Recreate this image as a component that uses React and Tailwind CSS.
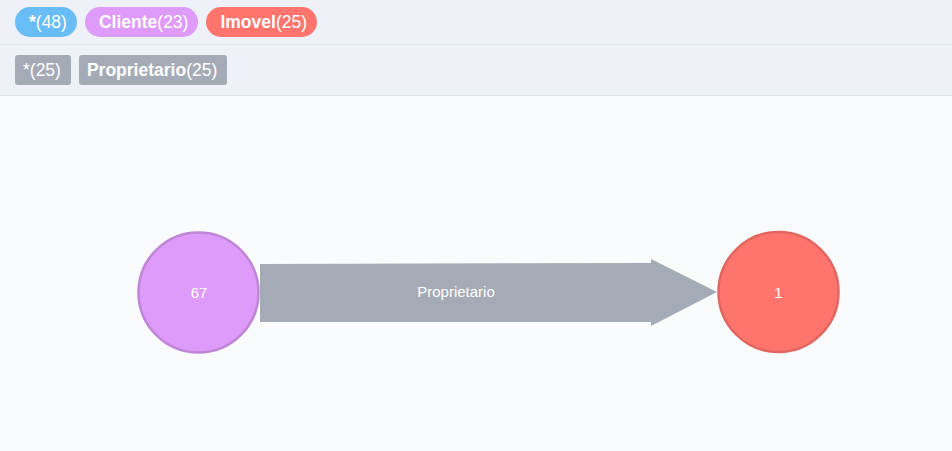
import React from "react";

const font = { fontFamily: '"Liberation Sans", Arial, sans-serif' };

function Pill({ label, count, bg }) {
  return (
    <div className={`flex items-center h-[30px] rounded-full pl-[14px] pr-[10px] text-[17.5px] text-white ${bg}`}>
      <span className="font-bold">{label}</span>
      <span>({count})</span>
    </div>
  );
}

function Tag({ label, count, bold }) {
  return (
    <div className="flex items-center h-[30px] rounded-[3px] pl-[8px] pr-[10px] text-[17.5px] text-white bg-[#a5abb6]">
      <span className={bold ? "font-bold" : ""}>{label}</span>
      <span>({count})</span>
    </div>
  );
}

export default function App() {
  return (
    <div className="w-[952px] h-[451px] flex flex-col bg-[#f9fbfd] overflow-hidden" style={font}>
      <div className="h-[45px] flex items-start pt-[7px] pl-[15px] gap-[8px] bg-[#eef1f8] border-b border-[#e1e5ed]">
        <Pill label="*" count="48" bg="bg-[#68bdf6]" />
        <Pill label="Cliente" count="23" bg="bg-[#de9bf9]" />
        <Pill label="Imovel" count="25" bg="bg-[#ff756e]" />
      </div>
      <div className="h-[51px] flex items-start pt-[10px] pl-[15px] gap-[8px] bg-[#eef1f8] border-b border-[#e1e5ed]">
        <Tag label="*" count="25" />
        <Tag label="Proprietario" count="25" bold />
      </div>
      <div className="flex-1 relative">
        <svg width="952" height="355" viewBox="0 96 952 355" className="absolute left-0 top-0">
          <polygon
            points="260,264 651,263 651,259 717,292 651,326 651,322 260,322"
            fill="#a5abb6"
          />
          <text x="456" y="297" textAnchor="middle" fill="#ffffff" fontSize="15" style={font}>
            Proprietario
          </text>
          <circle cx="198.5" cy="292.5" r="60" fill="#de9bf9" stroke="#bf85d6" strokeWidth="2.5" />
          <text x="199" y="298" textAnchor="middle" fill="#ffffff" fontSize="15" style={font}>
            67
          </text>
          <circle cx="778.5" cy="292" r="60" fill="#ff756e" stroke="#e06760" strokeWidth="2.5" />
          <text x="778.5" y="298" textAnchor="middle" fill="#ffffff" fontSize="15" style={font}>
            1
          </text>
        </svg>
      </div>
    </div>
  );
}
